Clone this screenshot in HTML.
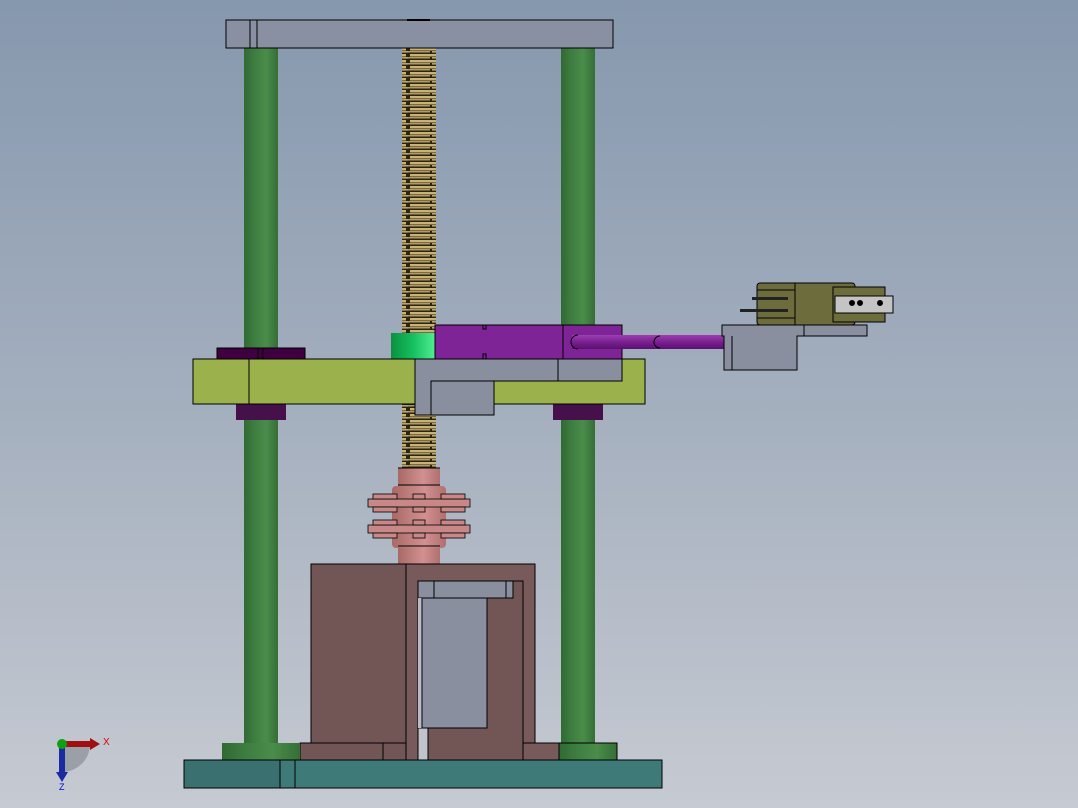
<!DOCTYPE html>
<html><head><meta charset="utf-8"><style>
html,body{margin:0;padding:0;width:1078px;height:808px;overflow:hidden}
svg{display:block}
text{font-family:"Liberation Sans",sans-serif}
</style></head><body>
<svg width="1078" height="808" viewBox="0 0 1078 808" xmlns="http://www.w3.org/2000/svg">
<defs>
<linearGradient id="bg" x1="0" y1="0" x2="0" y2="1">
<stop offset="0" stop-color="#8698ae"/><stop offset="0.5" stop-color="#a4afbe"/><stop offset="1" stop-color="#c6cad2"/></linearGradient>
<linearGradient id="col" x1="0" y1="0" x2="1" y2="0">
<stop offset="0" stop-color="#2f6a32"/><stop offset="0.3" stop-color="#3e7d40"/><stop offset="0.65" stop-color="#4a8c4a"/><stop offset="1" stop-color="#356e36"/></linearGradient>
<linearGradient id="grn" x1="0" y1="0" x2="1" y2="0">
<stop offset="0" stop-color="#0a9040"/><stop offset="0.5" stop-color="#14c060"/><stop offset="1" stop-color="#50ee90"/></linearGradient>
<linearGradient id="cu" x1="0" y1="0" x2="1" y2="0">
<stop offset="0" stop-color="#a86a66"/><stop offset="0.6" stop-color="#d29090"/><stop offset="1" stop-color="#b07070"/></linearGradient>
<linearGradient id="rod" x1="0" y1="0" x2="0" y2="1">
<stop offset="0" stop-color="#9a40b0"/><stop offset="0.5" stop-color="#7a2090"/><stop offset="1" stop-color="#5a1070"/></linearGradient>
<pattern id="thr" width="34" height="6" patternUnits="userSpaceOnUse">
<rect width="34" height="6" fill="#2a2410"/>
<rect x="2" y="0" width="30" height="2.5" fill="#c8b278"/>
<rect x="0" y="3" width="22" height="1.5" fill="#b09a60"/>
<rect x="24" y="3.2" width="10" height="1.3" fill="#d8c488"/>
</pattern>
</defs>
<rect width="1078" height="808" fill="url(#bg)"/>
<g stroke="#000" stroke-width="1">
<rect x="244" y="48" width="34" height="696" fill="url(#col)" stroke="none"/>
<rect x="561" y="48" width="34" height="696" fill="url(#col)" stroke="none"/>
<rect x="402" y="48" width="34" height="422" fill="url(#thr)" stroke="none"/>
<rect x="226" y="20" width="387" height="28" fill="#8890a2"/>
<line x1="250" y1="20" x2="250" y2="48"/><line x1="257" y1="20" x2="257" y2="48"/>
<rect x="407" y="19" width="23" height="2" fill="#000" stroke="none"/>
<rect x="217" y="348" width="88" height="11" fill="#3e0040"/>
<line x1="258" y1="348" x2="258" y2="359"/><line x1="263" y1="348" x2="263" y2="359"/>
<rect x="236" y="404" width="50" height="16" fill="#46104a" stroke="none"/>
<rect x="553" y="404" width="50" height="16" fill="#46104a" stroke="none"/>
<rect x="391" y="333" width="44" height="26" fill="url(#grn)" stroke="none"/>
<rect x="435" y="325" width="187" height="34" fill="#7e2496"/>
<line x1="563" y1="325" x2="563" y2="359"/>
<rect x="483" y="325" width="3" height="4" fill="#7e2496"/>
<rect x="483" y="354" width="3" height="5" fill="#7e2496"/>
<rect x="572" y="335" width="152" height="14" fill="url(#rod)" stroke="none"/>
<path d="M578 335 a7 7 0 0 0 0 14" fill="none"/>
<path d="M660 336 a5 5 0 0 0 0 12" fill="none"/>
<rect x="193" y="359" width="452" height="45" fill="#9bb14c"/>
<line x1="249" y1="359" x2="249" y2="404"/>
<path d="M415 359 H622 V381 H494 V415 H415 Z" fill="#8a8fa0"/>
<path d="M431 415 V381 H494" fill="none"/>
<line x1="558" y1="359" x2="558" y2="381"/>
<rect x="398" y="468" width="42" height="96" fill="url(#cu)" stroke="none"/>
<line x1="398" y1="468" x2="440" y2="468"/>
<line x1="398" y1="485" x2="440" y2="485"/>
<rect x="392" y="486" width="54" height="62" rx="4" fill="url(#cu)" stroke="none"/>
<line x1="398" y1="546" x2="440" y2="546"/>
<g fill="#c88888" stroke-width="0.8">
<rect x="368" y="499" width="102" height="8"/>
<rect x="368" y="525" width="102" height="8"/>
<rect x="373" y="494" width="24" height="5"/><rect x="413" y="494" width="12" height="5"/><rect x="441" y="494" width="24" height="5"/>
<rect x="373" y="507" width="24" height="5"/><rect x="413" y="507" width="12" height="5"/><rect x="441" y="507" width="24" height="5"/>
<rect x="373" y="520" width="24" height="5"/><rect x="413" y="520" width="12" height="5"/><rect x="441" y="520" width="24" height="5"/>
<rect x="373" y="533" width="24" height="5"/><rect x="413" y="533" width="12" height="5"/><rect x="441" y="533" width="24" height="5"/>
</g>
<path d="M722 325 H867 V336 H797 V370 H724 V336 H722 Z" fill="#8a8fa0"/>
<line x1="804" y1="325" x2="804" y2="336"/>
<line x1="732" y1="336" x2="732" y2="370"/>
<rect x="757" y="283" width="98" height="42" rx="3" fill="#6c6c3c"/>
<line x1="795" y1="283" x2="795" y2="325"/>
<line x1="757" y1="290" x2="795" y2="290"/><line x1="757" y1="318" x2="795" y2="318"/>
<rect x="833" y="287" width="52" height="35" fill="#6c6c3c"/>
<rect x="835" y="296" width="58" height="17" fill="#c4c4c4"/>
<circle cx="852" cy="303" r="2.5" fill="#000"/><circle cx="860" cy="303" r="2.5" fill="#000"/><circle cx="880" cy="303" r="2.5" fill="#000"/>
<rect x="752" y="297" width="36" height="3" fill="#222" stroke="none"/>
<rect x="740" y="309" width="48" height="3" fill="#222" stroke="none"/>
<rect x="311" y="564" width="95" height="179" fill="#725656"/>
<path d="M406 564 H535 V743 H523 V581 H418 V760 H406 Z" fill="#785a5a"/>
<rect x="418" y="581" width="105" height="179" fill="#725656"/>
<rect x="418" y="728" width="10" height="32" fill="#c0c4cc"/>
<rect x="418" y="581" width="95" height="17" fill="#8a8fa0"/>
<line x1="434" y1="581" x2="434" y2="598"/><line x1="506" y1="581" x2="506" y2="598"/>
<rect x="418" y="598" width="4" height="130" fill="#b8bcc8" stroke="none"/>
<rect x="422" y="598" width="65" height="130" fill="#8a8fa0"/>
<line x1="428" y1="728" x2="428" y2="760"/>
<rect x="300" y="743" width="106" height="17" fill="#725656"/>
<line x1="383" y1="743" x2="383" y2="760"/>
<rect x="523" y="743" width="36" height="17" fill="#785a5a"/>
<rect x="222" y="743" width="78" height="17" fill="url(#col)" stroke="none"/>
<rect x="559" y="743" width="58" height="17" fill="url(#col)"/>
<rect x="184" y="760" width="478" height="28" fill="#3d7a78"/>
<rect x="184" y="760" width="96" height="28" fill="#3a7070"/>
<line x1="295" y1="760" x2="295" y2="788"/>
</g>
<path d="M62 744 L90 744 A28 28 0 0 1 62 772 Z" fill="#9aa0a8"/>
<rect x="62" y="741" width="30" height="6" fill="#a01010"/>
<path d="M90 738 L100 744 L90 750 Z" fill="#a01010"/>
<rect x="59" y="744" width="6" height="30" fill="#1a2aa0"/>
<path d="M56 772 L62 782 L68 772 Z" fill="#1a2aa0"/>
<circle cx="62" cy="744" r="5" fill="#10a010"/>
<text x="103" y="745" font-size="10" fill="#e00000">X</text>
<text x="59" y="790" font-size="9" fill="#0000e0">Z</text>
</svg>
</body></html>
